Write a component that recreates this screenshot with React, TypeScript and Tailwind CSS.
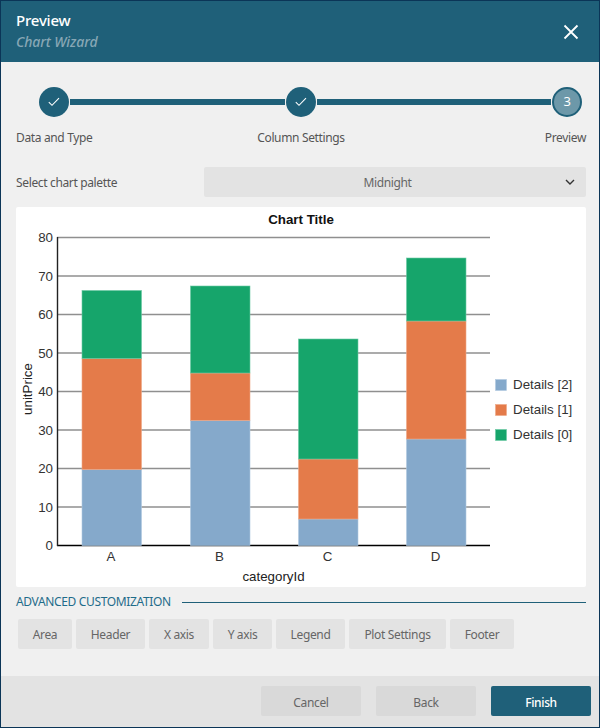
import React from "react";

const font = { fontFamily: '"Noto Sans", sans-serif' };

function Check() {
  return (
    <svg width="12" height="10" viewBox="0 0 12 10" fill="none" stroke="white" strokeWidth="1.1">
      <path d="M0.8 5.2 L4 8.3 L11 1.2" />
    </svg>
  );
}

const bars = [
  { label: "A", x: 82, tops: [469.5, 358.5, 290.5] },
  { label: "B", x: 190.5, tops: [420.5, 373, 286] },
  { label: "C", x: 298.5, tops: [519, 459, 339] },
  { label: "D", x: 406.5, tops: [439, 321, 258] },
];
const colors = ["#85a9cb", "#e47b4a", "#16a56b"];
const edge = ["#b0c9e0", "#efa888", "#6cc9a4"];
const base = 545.5;
const ticks = [0, 10, 20, 30, 40, 50, 60, 70, 80];

function Chart() {
  return (
    <svg width="570" height="380" viewBox="16 207 570 380" className="block tracking-normal" style={{ fontFamily: '"Liberation Sans", Arial, sans-serif' }}>
      <text x="301" y="224" textAnchor="middle" fontSize="13.33" fontWeight="700" fill="#111">Chart Title</text>
      {ticks.map((t) => {
        const y = base - t * 3.85;
        return (
          <g key={t}>
            <line x1="57" x2="490" y1={y} y2={y} stroke={t === 0 ? "#000" : "#8f8f8f"} strokeWidth={t === 0 ? 1.4 : 1.5} />
            <text x="53" y={y + 4.5} textAnchor="end" fontSize="13.33" fill="#333">{t}</text>
          </g>
        );
      })}
      <line x1="57.5" x2="57.5" y1="237" y2="546" stroke="#222" strokeWidth="1.4" />
      {bars.map((b) => {
        const edges = [base, b.tops[0], b.tops[1], b.tops[2]];
        return (
          <g key={b.label}>
            {[0, 1, 2].map((i) => (
              <rect key={i} x={b.x} y={edges[i + 1]} width="59.5" height={edges[i] - edges[i + 1]} fill={colors[i]} stroke={edge[i]} strokeWidth="0.6" />
            ))}
            <text x={b.x + 29} y="561" textAnchor="middle" fontSize="13.33" fill="#333">{b.label}</text>
          </g>
        );
      })}
      <text x="273.5" y="581" textAnchor="middle" fontSize="13.33" fill="#222">categoryId</text>
      <text transform="translate(32 389) rotate(-90)" textAnchor="middle" fontSize="13.33" fill="#222">unitPrice</text>
      {["Details [2]", "Details [1]", "Details [0]"].map((t, i) => (
        <g key={t}>
          <rect x="495.5" y={379.5 + i * 25} width="11" height="11" fill={colors[i]} stroke={edge[i]} strokeWidth="0.6" />
          <text x="513" y={389 + i * 25} fontSize="13.33" fill="#333">{t}</text>
        </g>
      ))}
    </svg>
  );
}

export default function App() {
  const tabs = [
    ["Area", "w-[54px]"],
    ["Header", "w-[69px]"],
    ["X axis", "w-[60px]"],
    ["Y axis", "w-[59px]"],
    ["Legend", "w-[69px]"],
    ["Plot Settings", "w-[97px]"],
    ["Footer", "w-[64px]"],
  ];
  return (
    <div className="w-[600px] h-[728px] border border-[#0b3557] bg-[#f0f0f0] flex flex-col overflow-hidden text-[12px] tracking-[-0.35px]" style={font}>
      <header className="h-[61px] bg-[#1f6079] flex items-center justify-between pl-[15px] pr-[20px] shrink-0">
        <div className="flex flex-col">
          <span className="text-[15px] leading-[20px] font-medium text-white tracking-[-0.2px]">Preview</span>
          <span className="text-[14px] leading-[22px] pt-px italic font-medium text-[#87a7b5] tracking-[-0.1px]">Chart Wizard</span>
        </div>
        <svg width="16" height="16" viewBox="0 0 16 16" stroke="white" strokeWidth="1.8">
          <path d="M1.5 1.5 L14.5 14.5 M14.5 1.5 L1.5 14.5" />
        </svg>
      </header>

      <div className="flex-1 flex flex-col pl-[15px] pr-[13px] pt-[25px]">
        <div className="flex items-center pl-[23px] pr-[4px] h-[30px]">
          <div className="w-[30px] h-[30px] rounded-full bg-[#1f6079] flex items-center justify-center shrink-0"><Check /></div>
          <div className="w-[215px] h-[6px] mx-[1px] bg-[#1f6079]" />
          <div className="w-[30px] h-[30px] rounded-full bg-[#1f6079] flex items-center justify-center shrink-0"><Check /></div>
          <div className="flex-1 h-[6px] mx-[1px] bg-[#1f6079]" />
          <div className="w-[30px] h-[30px] rounded-full bg-[#6d98a9] border-2 border-[#1f6079] flex items-center justify-center text-white text-[13px] shrink-0">3</div>
        </div>
        <div className="grid grid-cols-3 mt-[12px] leading-[18px] text-[#555]">
          <span>Data and Type</span>
          <span className="text-center">Column Settings</span>
          <span className="text-right">Preview</span>
        </div>

        <div className="flex items-center mt-[20px] h-[30px]">
          <span className="w-[188px] text-[#555] pt-[2px]">Select chart palette</span>
          <div className="flex-1 h-full bg-[#e3e3e3] rounded-[2px] flex items-center justify-center relative text-[#666] pr-[15px] pt-[2px]">
            Midnight
            <svg width="10" height="6" viewBox="0 0 10 6" fill="none" stroke="#333" strokeWidth="1.4" className="absolute right-[11px] top-[12px]">
              <path d="M1 1 L5 5 L9 1" />
            </svg>
          </div>
        </div>

        <div className="mt-[10px] h-[380px] bg-white rounded-[2px]">
          <Chart />
        </div>

        <div className="flex items-center gap-[11px] mt-[6px] h-[18px]">
          <span className="text-[#1f6c8a] whitespace-nowrap">ADVANCED CUSTOMIZATION</span>
          <div className="flex-1 h-px bg-[#1f6079]" />
        </div>

        <div className="flex gap-[4px] mt-[8px] pl-[2px]">
          {tabs.map(([t, w]) => (
            <div key={t} className={`${w} h-[30px] bg-[#e3e3e3] rounded-[2px] flex items-center justify-center text-[#666] pt-[2px]`}>{t}</div>
          ))}
        </div>
      </div>

      <footer className="h-[51px] bg-[#e3e3e3] flex items-center justify-end gap-[15px] pr-[8px] shrink-0 pb-[1px]">
        <div className="w-[100px] h-[30px] bg-[#d9d9d9] rounded-[2px] flex items-center justify-center text-[#666] pt-[3px]">Cancel</div>
        <div className="w-[100px] h-[30px] bg-[#d9d9d9] rounded-[2px] flex items-center justify-center text-[#666] pt-[3px]">Back</div>
        <div className="w-[100px] h-[30px] bg-[#1f6079] rounded-[2px] flex items-center justify-center text-white font-medium pt-[3px]">Finish</div>
      </footer>
    </div>
  );
}
